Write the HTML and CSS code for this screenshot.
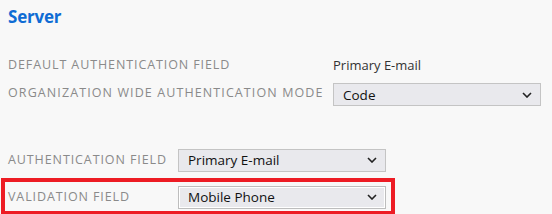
FILE: index.html
```html
<!DOCTYPE html>
<html lang="en">
<head>
  <meta charset="UTF-8">
  <title>Server</title>
  <link rel="stylesheet" href="styles.css">
</head>
<body>
  <div class="page">
    <h2 class="title">Server</h2>

    <div class="group group-server">
      <span class="label">DEFAULT AUTHENTICATION FIELD</span>
      <span class="value">Primary E-mail</span>

      <span class="label">ORGANIZATION WIDE AUTHENTICATION MODE</span>
      <span class="dropdown">
        <select><option>Code</option></select>
        <svg class="chevron" width="10" height="6" viewBox="0 0 10 6"><path d="M1 1 L5 5 L9 1" fill="none" stroke="#222" stroke-width="1.6"/></svg>
      </span>
    </div>

    <div class="group group-fields">
      <div class="row">
        <span class="label">AUTHENTICATION FIELD</span>
        <span class="dropdown">
          <select><option>Primary E-mail</option></select>
          <svg class="chevron" width="10" height="6" viewBox="0 0 10 6"><path d="M1 1 L5 5 L9 1" fill="none" stroke="#222" stroke-width="1.6"/></svg>
        </span>
      </div>
      <div class="row highlight">
        <span class="label">VALIDATION FIELD</span>
        <span class="dropdown focused">
          <select><option>Mobile Phone</option></select>
          <svg class="chevron" width="10" height="6" viewBox="0 0 10 6"><path d="M1 1 L5 5 L9 1" fill="none" stroke="#222" stroke-width="1.6"/></svg>
        </span>
      </div>
    </div>
  </div>
</body>
</html>
```

FILE: styles.css
```css
html, body {
  margin: 0;
  background: #f8f8f8;
}

body {
  font-family: "Open Sans", "Noto Sans", sans-serif;
  color: #333;
}

.page {
  width: 552px;
  height: 214px;
  overflow: hidden;
}

.title {
  margin: 0;
  padding: 5px 0 0 8px;
  font-size: 17px;
  line-height: 24px;
  font-weight: bold;
  color: #0f6cd4;
  letter-spacing: -0.2px;
}

.label {
  font-size: 12.5px;
  letter-spacing: 0.9px;
  color: #8a8a8a;
}

.value {
  font-size: 13px;
  color: #333;
}

.group-server {
  display: grid;
  grid-template-columns: 325px 208px;
  row-gap: 9px;
  align-items: start;
  padding: 26px 0 0 8px;
  line-height: 18px;
}

.group-server .label,
.group-server .value {
  padding-top: 1px;
}

.group-server .label:nth-of-type(3) {
  letter-spacing: 1.1px;
}

.group-fields {
  padding-top: 42px;
}

.row {
  display: flex;
  align-items: center;
  height: 23px;
  padding-left: 8px;
}

.row .label {
  width: 170px;
  flex: none;
}

.row + .row {
  margin-top: 7px;
}

.highlight {
  position: relative;
  margin-left: 1px;
  width: 383px;
  height: 29px;
  padding-left: 3px;
  border: 4px solid #ed1c24;
}

.dropdown {
  position: relative;
  display: inline-block;
  width: 208px;
  height: 23px;
}

.dropdown select {
  -webkit-appearance: none;
  appearance: none;
  width: 100%;
  height: 100%;
  margin: 0;
  padding: 0 0 0 9px;
  border: 1px solid #c4c4c4;
  border-radius: 0;
  background: #e9e9ed;
  font-family: "Open Sans", "Noto Sans", sans-serif;
  font-size: 13.5px;
  color: #111;
  outline: none;
}

.dropdown.focused select {
  box-shadow: inset 0 0 0 1px #fff;
  border-color: #bdbdbd;
}

.chevron {
  position: absolute;
  right: 9px;
  top: 9px;
  pointer-events: none;
}
```
